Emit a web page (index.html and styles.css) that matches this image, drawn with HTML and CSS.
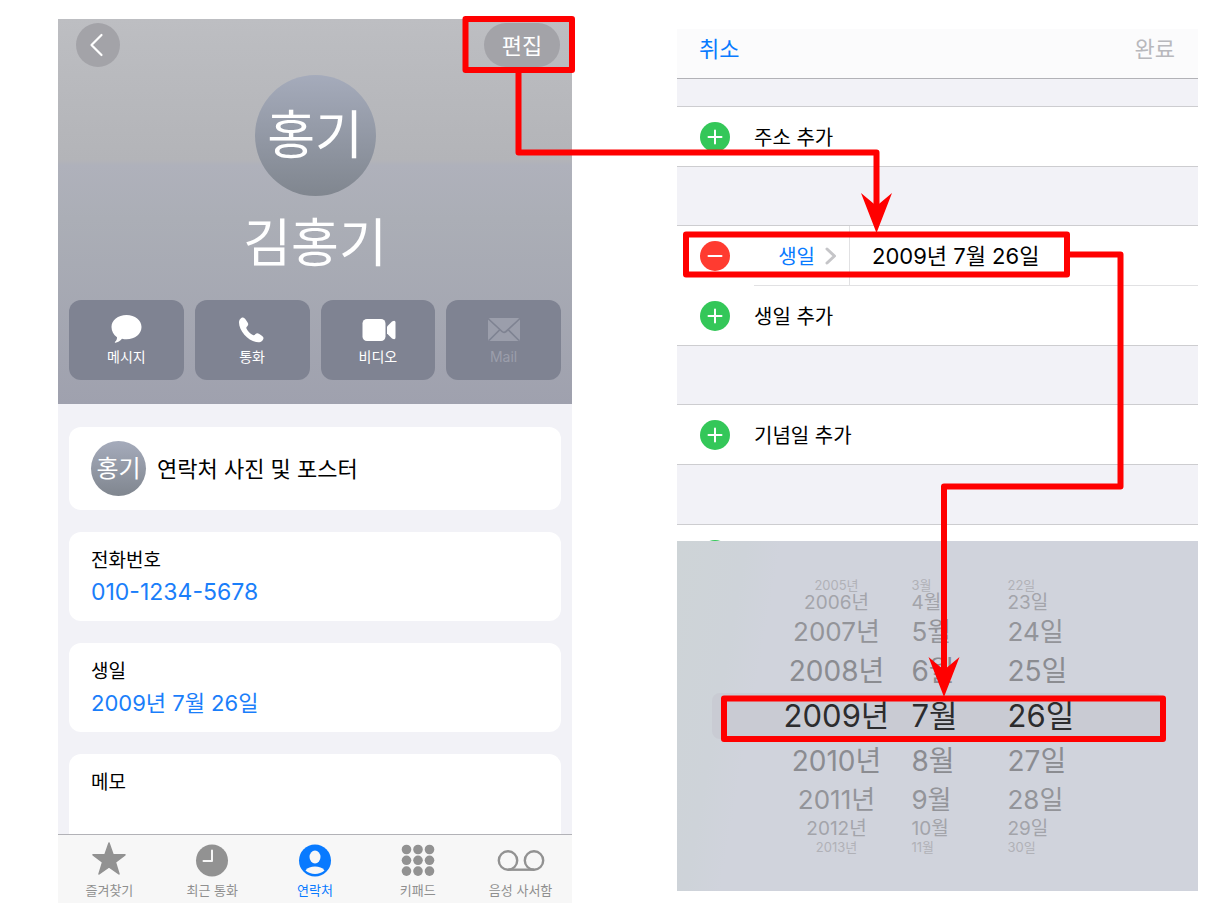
FILE: index.html
```html
<!DOCTYPE html>
<html lang="ko">
<head>
    <meta charset="UTF-8">
    <meta name="viewport" content="width=device-width, initial-scale=1.0">
    <title>연락처 생일 편집</title>
    <link rel="stylesheet" href="styles.css">
</head>
<body>

    <main class="guide">
        <!-- Contact card -->
        <section class="phone contact">
            <header class="contact-header">
                <div class="top-row">
                    <button class="back-btn" type="button" aria-label="뒤로">
                        <svg width="44" height="44" viewBox="0 0 44 44"><path d="M25.500 12L15.500 22L25.500 32" fill="none" stroke="#fff" stroke-width="2.200" stroke-linecap="round" stroke-linejoin="round"/></svg>
                    </button>
                    <button class="edit-btn" type="button">편집</button>
                </div>
                <div class="avatar">홍기</div>
                <h1 class="name">김홍기</h1>
                <div class="actions">
                    <button class="action" type="button">
                        <svg width="34" height="30" viewBox="0 0 34 30"><path d="M17.500 1C26 1 32.500 6 32.500 13S26 25.300 17.500 25.300C16 25.300 14.500 25.200 13 24.800C11.300 26.800 8.600 28.600 6.400 28.800C5.800 28.800 5.700 28.200 6.100 27.800C7.600 26.300 8.200 24.600 8 23.200C4.600 20.800 2.500 17.200 2.500 13C2.500 6 9 1 17.500 1Z" fill="#fff"/></svg>
                        메시지
                    </button>
                    <button class="action" type="button">
                        <svg width="34" height="30" viewBox="0 0 34 30"><path d="M4 8.500C4 5.500 6.200 3.500 8 3.500C9.600 3.500 11 6 12.300 8C13.600 10 13.400 10.900 12.500 11.900C11.300 13.100 11 13.500 11.600 14.700C12.900 17.300 15.500 19.900 17.900 21C19 21.500 19.500 21.200 20.600 20C21.700 18.900 22.700 18.900 24.300 20C26.300 21.300 28.500 22.500 28.500 24C28.500 26 26.300 28.300 23.500 28.300C14.500 28.300 4 17.500 4 8.500Z" fill="#fff"/></svg>
                        통화
                    </button>
                    <button class="action" type="button">
                        <svg width="36" height="30" viewBox="0 0 36 30"><rect x="2.500" y="5" width="23" height="22" rx="4.500" fill="#fff"/><path d="M27 12.500L32 7.500Q35.500 5.500 35.500 8.500V23.500Q35.500 26.500 32 24.500L27 19.500Z" fill="#fff"/></svg>
                        비디오
                    </button>
                    <button class="action" type="button" disabled>
                        <svg width="34" height="30" viewBox="0 0 34 30"><rect x="1" y="4" width="32" height="23" rx="2" fill="#9b9eab"/><path d="M1 4.500L15 17.500Q17 19.300 19 17.500L33 4.500M2 26.500L12.500 16M32 26.500L21.500 16" fill="none" stroke="#7f8392" stroke-width="1.700"/></svg>
                        Mail
                    </button>
                </div>
            </header>

            <div class="cards">
                <div class="card photo-card">
                    <span class="avatar-small">홍기</span>
                    <span class="photo-text">연락처 사진 및 포스터</span>
                </div>
                <div class="card">
                    <div class="label">전화번호</div>
                    <a class="value phone-number" href="tel:010-1234-5678">010-1234-5678</a>
                </div>
                <div class="card">
                    <div class="label">생일</div>
                    <a class="value" href="#birthday">2009년 7월 26일</a>
                </div>
                <div class="card memo-card">
                    <div class="label">메모</div>
                </div>
            </div>

            <nav class="tab-bar">
                <a class="tab" href="#favorites">
                    <svg width="36" height="36" viewBox="0 0 36 36"><path d="M18 2L22 13.600L34 13.800L24.400 21.200L28 33L18 26L8 33L11.600 21.200L2 13.800L14 13.600Z" fill="#929292" stroke="#929292" stroke-width="1.500" stroke-linejoin="round"/></svg>
                    즐겨찾기
                </a>
                <a class="tab" href="#recents">
                    <svg width="36" height="36" viewBox="0 0 36 36"><circle cx="18" cy="19.500" r="16" fill="#929292"/><path d="M18 9.500V20H9.500" fill="none" stroke="#f7f7f7" stroke-width="2" stroke-linecap="round" stroke-linejoin="round"/></svg>
                    최근 통화
                </a>
                <a class="tab active" href="#contacts">
                    <svg width="36" height="36" viewBox="0 0 36 36"><circle cx="18" cy="19.500" r="16" fill="#087aff"/><ellipse cx="18" cy="16" rx="5.500" ry="6.500" fill="#f7f7f7"/><path d="M8.500 29.500C10.500 26.500 14 25.500 18 25.500S25.500 26.500 27.500 29.500C22.500 34 13.500 34 8.500 29.500Z" fill="#f7f7f7"/></svg>
                    연락처
                </a>
                <a class="tab" href="#keypad">
                    <svg width="36" height="36" viewBox="0 0 36 36" fill="#929292"><circle cx="6.500" cy="8.500" r="4.800"/><circle cx="18" cy="8.500" r="4.800"/><circle cx="29.500" cy="8.500" r="4.800"/><circle cx="6.500" cy="19.300" r="4.800"/><circle cx="18" cy="19.300" r="4.800"/><circle cx="29.500" cy="19.300" r="4.800"/><circle cx="6.500" cy="30.100" r="4.800"/><circle cx="18" cy="30.100" r="4.800"/><circle cx="29.500" cy="30.100" r="4.800"/></svg>
                    키패드
                </a>
                <a class="tab" href="#voicemail">
                    <svg width="48" height="36" viewBox="0 0 48 36" fill="none" stroke="#929292" stroke-width="2.400"><circle cx="11" cy="19.500" r="9.200"/><circle cx="37" cy="19.500" r="9.200"/><path d="M11 28.700H37"/></svg>
                    음성 사서함
                </a>
            </nav>
        </section>

        <!-- Edit screen -->
        <section class="phone edit">
            <header class="edit-bar">
                <button class="cancel-btn" type="button">취소</button>
                <button class="done-btn" type="button" disabled>완료</button>
            </header>

            <div class="group">
                <button class="row" type="button">
                    <svg class="badge" viewBox="0 0 30 30"><circle cx="15" cy="15" r="15" fill="#34c759"/><path d="M8.500 15H21.500M15 8.500V21.500" stroke="#fff" stroke-width="2" stroke-linecap="round"/></svg>
                    주소 추가
                </button>
            </div>

            <div class="group">
                <div class="row">
                    <button class="remove-btn" type="button" aria-label="생일 삭제">
                        <svg class="badge" viewBox="0 0 30 30"><circle cx="15" cy="15" r="15" fill="#ff3b30"/><path d="M8.500 15H21.500" stroke="#fff" stroke-width="2" stroke-linecap="round"/></svg>
                    </button>
                    <div class="row-fields">
                        <button class="type-btn" type="button">
                            생일
                            <svg width="12" height="20" viewBox="0 0 12 20"><path d="M2 3L9.500 10L2 17" fill="none" stroke="#c5c5c8" stroke-width="3" stroke-linecap="round" stroke-linejoin="round"/></svg>
                        </button>
                        <input class="date-input" type="text" value="2009년 7월 26일" aria-label="생일" readonly>
                    </div>
                </div>
                <button class="row" type="button">
                    <svg class="badge" viewBox="0 0 30 30"><circle cx="15" cy="15" r="15" fill="#34c759"/><path d="M8.500 15H21.500M15 8.500V21.500" stroke="#fff" stroke-width="2" stroke-linecap="round"/></svg>
                    생일 추가
                </button>
            </div>

            <div class="group">
                <button class="row" type="button">
                    <svg class="badge" viewBox="0 0 30 30"><circle cx="15" cy="15" r="15" fill="#34c759"/><path d="M8.500 15H21.500M15 8.500V21.500" stroke="#fff" stroke-width="2" stroke-linecap="round"/></svg>
                    기념일 추가
                </button>
            </div>

            <!-- Only the top edge shows above the picker -->
            <div class="group cut-group">
                <div class="row">
                    <svg class="badge" viewBox="0 0 30 30"><circle cx="15" cy="15" r="15" fill="#34c759"/></svg>
                </div>
            </div>

            <div class="picker">
                <div class="picker-band"></div>
                <ul class="wheel wheel-year">
                    <li class="far4">2005년</li>
                    <li class="far3">2006년</li>
                    <li class="far2">2007년</li>
                    <li class="far1">2008년</li>
                    <li class="selected">2009년</li>
                    <li class="far1">2010년</li>
                    <li class="far2">2011년</li>
                    <li class="far3">2012년</li>
                    <li class="far4">2013년</li>
                </ul>
                <ul class="wheel wheel-month">
                    <li class="far4">3월</li>
                    <li class="far3">4월</li>
                    <li class="far2">5월</li>
                    <li class="far1">6월</li>
                    <li class="selected">7월</li>
                    <li class="far1">8월</li>
                    <li class="far2">9월</li>
                    <li class="far3">10월</li>
                    <li class="far4">11월</li>
                </ul>
                <ul class="wheel wheel-day">
                    <li class="far4">22일</li>
                    <li class="far3">23일</li>
                    <li class="far2">24일</li>
                    <li class="far1">25일</li>
                    <li class="selected">26일</li>
                    <li class="far1">27일</li>
                    <li class="far2">28일</li>
                    <li class="far3">29일</li>
                    <li class="far4">30일</li>
                </ul>
            </div>
        </section>

        <!-- Red boxes and arrows -->
        <svg class="marks" viewBox="0 0 1216 916" preserveAspectRatio="none" aria-hidden="true">
            <g fill="none" stroke="#f00" stroke-width="6" stroke-linejoin="round">
                <rect x="465.500" y="19" width="106.500" height="51"/>
                <path d="M518.500 70V152.500H876.500V208"/>
                <rect x="686" y="234.500" width="381" height="40"/>
                <path d="M1067 254.500H1120.500V486.500H944V672"/>
                <rect x="724" y="698.500" width="439" height="40.500"/>
            </g>
            <path d="M876.500 233L861 193L876.500 206L892 193Z" fill="#f00"/>
            <path d="M944 697L928.500 657L944 670L959.500 657Z" fill="#f00"/>
        </svg>
    </main>

</body>
</html>
```

FILE: styles.css
```css
* {
    box-sizing: border-box;
}
body {
    margin: 0;
    background: #fff;
    color: #000;
    font-family: Inter, "Noto Sans CJK KR", sans-serif;
    font-size: 20px;
}
button, input {
    margin: 0;
    padding: 0;
    border: none;
    background: none;
    color: inherit;
    font: inherit;
}
button {
    cursor: pointer;
}
a {
    text-decoration: none;
}
svg {
    display: block;
    flex: none;
}
.guide {
    position: relative;
    display: grid;
    grid-template-columns: minmax(0, 514fr) minmax(0, 521fr);
    column-gap: 105px;
    align-items: start;
    padding: 19px 18px 14px 58px;
}
.marks {
    position: absolute;
    top: 0;
    left: 0;
    width: 100%;
    height: 916px;
    pointer-events: none;
}

/* Contact card */
.contact {
    background: #f2f2f7;
}
.contact-header {
    padding: 4px 11px 24px;
    background: linear-gradient(#bdbec2 0, #b3b4b8 141px, #afb1bb 146px, #abaeb6 200px, #9fa1ae 100%);
    color: #fff;
}
.top-row {
    display: flex;
    justify-content: space-between;
    padding: 0 1px 0 7px;
}
.back-btn, .edit-btn {
    height: 44px;
    border-radius: 22px;
    background: #a3a3a8;
}
.back-btn {
    width: 44px;
}
.edit-btn {
    width: 76px;
    padding-bottom: 3px;
    font-size: 22px;
}
.avatar {
    width: 121px;
    height: 121px;
    margin: 8px auto 0;
    border-radius: 50%;
    background: linear-gradient(#a5abbb, #80868f);
    font-size: 52px;
    line-height: 121px;
    text-align: center;
}
.name {
    margin: 16px 0 24px;
    font-size: 52px;
    font-weight: 400;
    line-height: 64px;
    text-align: center;
}
.actions {
    display: grid;
    grid-template-columns: repeat(4, 1fr);
    gap: 11px;
}
.action {
    display: flex;
    flex-direction: column;
    align-items: center;
    height: 80px;
    padding-top: 14px;
    border-radius: 12px;
    background: #7f8392;
    font-size: 14px;
    line-height: 26px;
}
.action:disabled {
    color: #9b9eab;
}
.cards {
    display: flex;
    flex-direction: column;
    gap: 22px;
    padding: 23px 11px 0;
}
.card {
    padding: 15px 22px 12px;
    border-radius: 12px;
    background: #fff;
}
.photo-card {
    display: flex;
    align-items: center;
    gap: 11px;
    padding: 14px 22px;
    font-size: 22px;
}
.photo-text {
    padding-bottom: 4px;
}
.avatar-small {
    width: 55px;
    height: 55px;
    border-radius: 50%;
    background: linear-gradient(#a5abbb, #80868f);
    color: #fff;
    font-size: 24px;
    line-height: 55px;
    text-align: center;
}
.label {
    font-size: 19px;
    line-height: 28px;
}
.value {
    display: block;
    color: #1a7efa;
    font-size: 22px;
    line-height: 34px;
}
.phone-number {
    font-size: 23px;
}
.memo-card {
    height: 80px;
    border-radius: 12px 12px 0 0;
}
.tab-bar {
    display: grid;
    grid-template-columns: repeat(5, 1fr);
    height: 69px;
    padding-top: 6px;
    border-top: 1px solid #b2b2b7;
    background: #f7f7f7;
}
.tab {
    display: flex;
    flex-direction: column;
    align-items: center;
    color: #8f8f8f;
    font-size: 13px;
    line-height: 26px;
}
.tab.active {
    color: #087aff;
}

/* Edit screen */
.edit {
    margin-top: 10px;
    background: #f2f2f7;
}
.edit-bar {
    display: flex;
    justify-content: space-between;
    height: 50px;
    padding: 0 23px 14px 22px;
    border-bottom: 1px solid #b2b2b7;
    background: #fbfbfc;
    font-size: 22px;
}
.cancel-btn {
    color: #087aff;
}
.done-btn {
    color: #b8b8bc;
}
.group {
    margin-top: 58px;
    border-top: 1px solid #cdcdd0;
    border-bottom: 1px solid #cdcdd0;
    background: #fff;
}
.edit-bar + .group {
    margin-top: 27px;
}
.row {
    display: flex;
    align-items: center;
    gap: 24px;
    width: 100%;
    height: 59px;
    padding-left: 23px;
    text-align: left;
}
.badge {
    width: 30px;
    height: 30px;
}
.row-fields {
    display: flex;
    flex: 1;
    min-width: 0;
    height: 60px;
    border-bottom: 1px solid #e1e1e3;
}
.row:has(.row-fields) {
    height: 60px;
}
.type-btn {
    display: flex;
    flex: none;
    align-items: center;
    justify-content: flex-end;
    gap: 10px;
    width: 96px;
    padding-right: 12px;
    border-right: 1px solid #e1e1e3;
    color: #087aff;
}
.date-input {
    flex: 1;
    min-width: 0;
    padding: 0 0 3px 22px;
    font-size: 22px;
}
.group.cut-group {
    height: 17px;
    margin-top: 59px;
    border-bottom: none;
    overflow: hidden;
}

/* Date wheels */
.picker {
    position: relative;
    display: flex;
    justify-content: center;
    gap: 16px;
    padding: 37px 0;
    background: linear-gradient(100deg, #ced4d7 0, #ced3d9 12%, #d0d3dc 18%);
}
.picker-band {
    position: absolute;
    top: 152px;
    right: 35px;
    left: 35px;
    height: 46px;
    border-radius: 8px;
    background: #c9cbd3;
}
.wheel {
    position: relative;
    margin: 0;
    padding: 0;
    list-style: none;
    white-space: nowrap;
}
.wheel-year {
    width: 114px;
    padding-right: 4px;
    text-align: center;
}
.wheel-month {
    width: 80px;
}
.wheel-day {
    width: 86px;
}
.selected {
    color: #2c2c2e;
    font-size: 31px;
    line-height: 48px;
}
.far1 {
    color: #8b8c91;
    font-size: 28px;
    line-height: 42px;
}
.far2 {
    color: #939499;
    font-size: 26px;
    line-height: 36px;
}
.far3 {
    color: #a3a4aa;
    font-size: 19px;
    line-height: 22px;
}
.far4 {
    color: #b0b1b7;
    font-size: 13px;
    line-height: 14px;
}
```
